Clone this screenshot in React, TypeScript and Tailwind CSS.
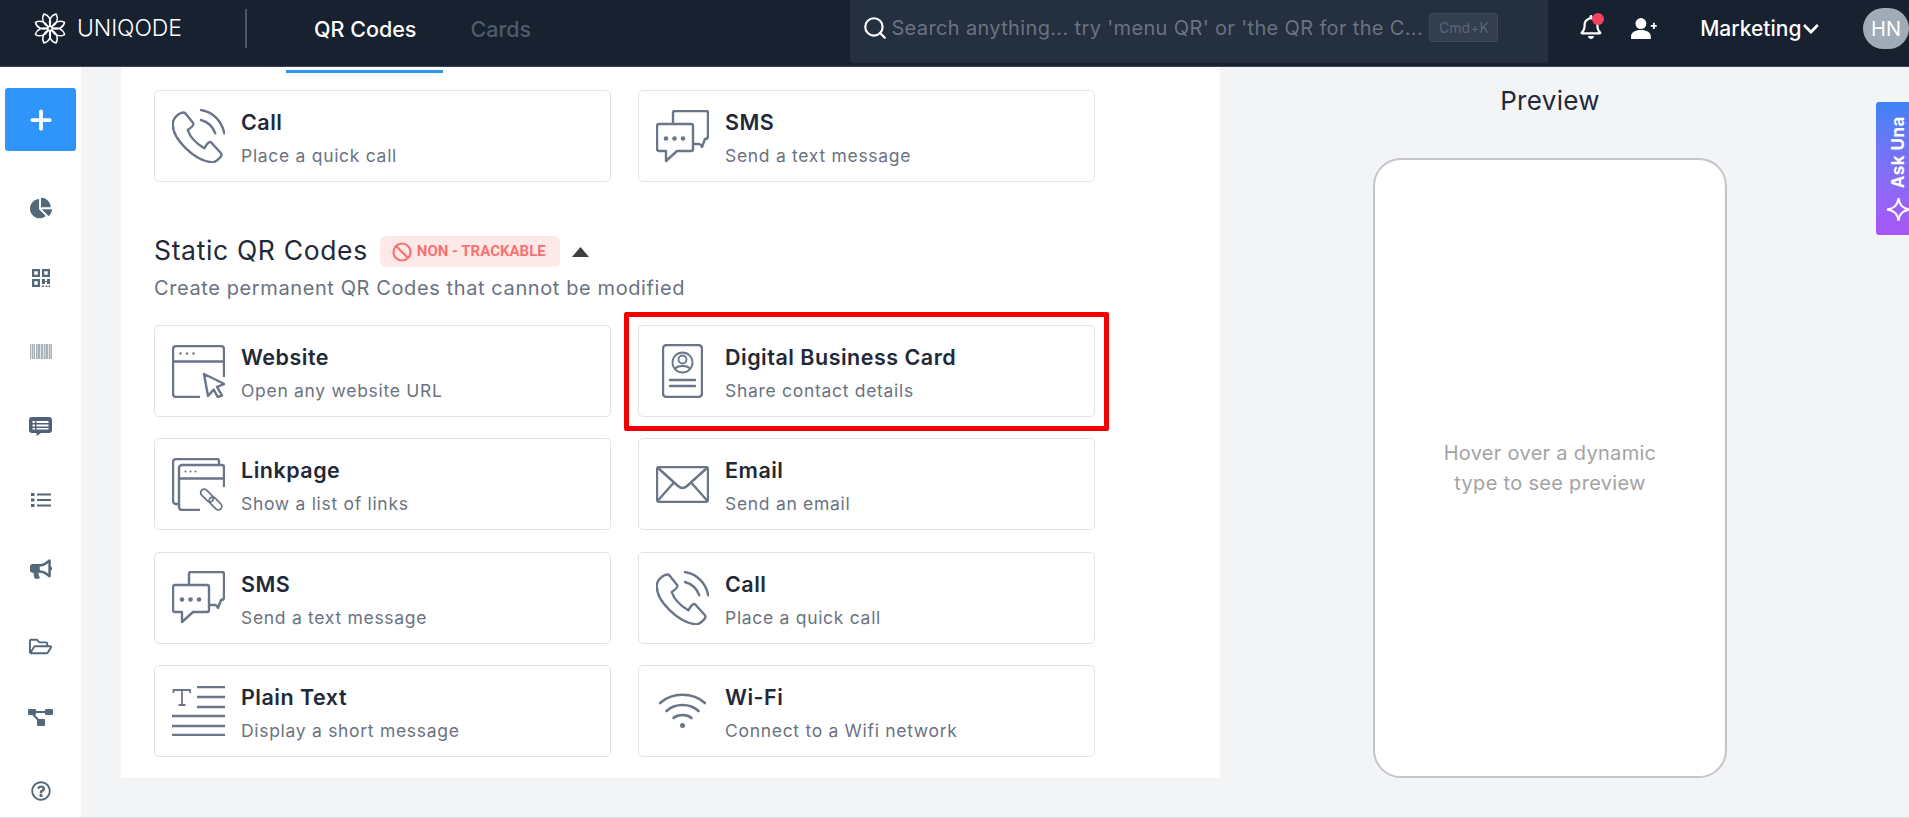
import { Search, Plus } from 'lucide-react';
import {
  FaChartPie,
  FaBullhorn,
  FaRegFolderOpen,
  FaRegQuestionCircle,
  FaRegBell,
  FaChevronDown,
} from 'react-icons/fa';

const font = 'font-["Inter","Liberation_Sans",sans-serif]';

function Logo() {
  const petals = [22.5, 67.5, 112.5, 157.5, 202.5, 247.5, 292.5, 337.5];
  return (
    <svg viewBox="0 0 34 34" className="h-[33px] w-[34px]" fill="none" stroke="#fff" strokeWidth="1.5">
      {petals.map((a) => (
        <g key={a} transform={`rotate(${a} 17 17)`}>
          <path d="M17 15C12 11 12.500 4 17 .8C21.500 4 22 11 17 15Z" />
        </g>
      ))}
    </svg>
  );
}

function PhoneIcon() {
  return (
    <svg viewBox="0 0 53 54" className="h-[54px] w-[53px]" fill="none" stroke="#6b7588" strokeWidth="2.4" strokeLinecap="round" strokeLinejoin="round">
      <path d="M5.700 6C7.500 4.500 11.500 2.500 13.300 4.300L21.300 14.300C22.300 16 20 18 15.700 21C18 28 25 35 32.300 39.300C35 35 37 32 39 33.300L49 44.300C50 46 49 48 47.300 49.300C45 51.500 42 54 39 53.200C22 51 1 30 .8 16C.5 12 3 8 5.700 6Z" />
      <path d="M29 1C41 3 50 12 52.300 24.300" />
      <path d="M29 11C36 13 41 18 43.300 24.300" />
    </svg>
  );
}

function SmsIcon() {
  return (
    <svg viewBox="0 0 53 53" className="h-[53px] w-[53px]" fill="none" stroke="#6b7588" strokeWidth="2.4" strokeLinecap="round" strokeLinejoin="round">
      <path d="M17 13V3a2 2 0 0 1 2-2h31a2 2 0 0 1 2 2v23c0 2-1 3-3 3l-3 8c-1-2-2-3-3-3h-6" />
      <path d="M3 14h32a2 2 0 0 1 2 2v23a2 2 0 0 1-2 2H21L10 51V41H3a2 2 0 0 1-2-2V16a2 2 0 0 1 2-2Z" />
      <circle cx="10" cy="28.500" r="2.300" fill="#6b7588" stroke="none" />
      <circle cx="18.500" cy="28.500" r="2.300" fill="#6b7588" stroke="none" />
      <circle cx="27" cy="28.500" r="2.300" fill="#6b7588" stroke="none" />
    </svg>
  );
}

function WebsiteIcon() {
  return (
    <svg viewBox="0 0 53 53" className="h-[53px] w-[53px]" fill="none" stroke="#6b7588" strokeWidth="2.4" strokeLinecap="round" strokeLinejoin="round">
      <path d="M27 52H4a3 3 0 0 1-3-3V4a3 3 0 0 1 3-3h45a3 3 0 0 1 3 3v27" />
      <path d="M2 16.500h50" />
      <circle cx="8.500" cy="8.500" r="1.200" fill="#6b7588" stroke="none" />
      <circle cx="15" cy="8.500" r="1.200" fill="#6b7588" stroke="none" />
      <circle cx="21.500" cy="8.500" r="1.200" fill="#6b7588" stroke="none" />
      <path d="M32 29L52.500 39L45 41.800L50 50.500L45.700 52L41.700 44.500L36 51Z" />
    </svg>
  );
}

function LinkpageIcon() {
  return (
    <svg viewBox="0 0 53 53" className="h-[53px] w-[53px]" fill="none" stroke="#6b7588" strokeWidth="2.4" strokeLinecap="round" strokeLinejoin="round">
      <path d="M47 5V3a2 2 0 0 0-2-2H4a3 3 0 0 0-3 3v39a3 3 0 0 0 3 3h3" />
      <path d="M27 52H10a3 3 0 0 1-3-3V10a3 3 0 0 1 3-3h40a2 2 0 0 1 2 2v19" />
      <path d="M7 20.500h45" />
      <circle cx="13.500" cy="13.500" r="1.100" fill="#6b7588" stroke="none" />
      <circle cx="18.500" cy="13.500" r="1.100" fill="#6b7588" stroke="none" />
      <circle cx="23.500" cy="13.500" r="1.100" fill="#6b7588" stroke="none" />
      <rect x="27.500" y="34" width="15" height="7" rx="3.500" transform="rotate(45 35 37.500)" strokeWidth="1.800" />
      <rect x="36" y="42" width="15" height="7" rx="3.500" transform="rotate(45 43.500 45.500)" strokeWidth="1.800" />
    </svg>
  );
}

function CardIcon() {
  return (
    <svg viewBox="0 0 41 54" className="h-[54px] w-[41px]" fill="none" stroke="#6b7588" strokeWidth="2.4" strokeLinecap="round" strokeLinejoin="round">
      <rect x="1" y="1" width="39" height="52" rx="3.500" />
      <circle cx="20.500" cy="18.500" r="10" strokeWidth="1.800" />
      <circle cx="20.500" cy="15.500" r="4" strokeWidth="1.800" />
      <path d="M13 25c2-4 13-4 15 0" strokeWidth="1.800" />
      <path d="M8 36h25M8 42h25" />
    </svg>
  );
}

function EmailIcon() {
  return (
    <svg viewBox="0 0 53 37" className="h-[37px] w-[53px]" fill="none" stroke="#6b7588" strokeWidth="2.4" strokeLinecap="round" strokeLinejoin="round">
      <rect x="1" y="1" width="51" height="35" rx="3" />
      <path d="M1.500 1.500L22 20Q26.500 24 31 20L51.500 1.500" />
      <path d="M1.500 35L17 17.500M51.500 35L36 17.500" />
    </svg>
  );
}

function TextIcon() {
  return (
    <svg viewBox="0 0 53 50" className="h-[50px] w-[53px]" fill="none" stroke="#6b7588" strokeWidth="2.4">
      <path d="M1.500 7V4H18V7M10 4V19M6.500 19H13.500" strokeWidth="1.800" />
      <path d="M25 1h28M25 11h28M25 21h28M0 30h53M0 40h53M0 49h53" />
    </svg>
  );
}

function WifiIcon() {
  return (
    <svg viewBox="0 0 47 35" className="h-[35px] w-[47px]" fill="none" stroke="#6b7588" strokeWidth="2.600" strokeLinecap="round">
      <path d="M1 10C13-1 34-1 46 10" />
      <path d="M7.500 18C16 10 31 10 39.500 18" />
      <path d="M14.500 25C19 21 28 21 32.500 25" />
      <circle cx="23.500" cy="32.500" r="2.500" fill="#6b7588" stroke="none" />
    </svg>
  );
}

function QrNavIcon() {
  return (
    <svg viewBox="0 0 18 18" className="h-[18px] w-[18px]" fill="#53697a">
      <path fillRule="evenodd" d="M0 0h8v8H0ZM2.300 2.300v3.400h3.400V2.300ZM10 0h8v8h-8ZM12.300 2.300v3.400h3.400V2.300ZM0 10h8v8H0ZM2.300 12.300v3.400h3.400v-3.400Z" />
      <path d="M10 10h3v2h2v-2h3v5h-3v-2h-2v2h-3ZM10 16.500h2V18h-2ZM13.500 16.500h2V18h-2ZM16.500 16.500H18V18h-1.500Z" />
    </svg>
  );
}

function BarcodeNavIcon() {
  const bars = [0, 2, 3.5, 6, 7.5, 8.500, 10.500, 12, 14, 15.500, 17, 19, 20.500];
  return (
    <svg viewBox="0 0 21.500 15" className="h-[15px] w-[22px]" fill="#8b99a5">
      {bars.map((x) => (
        <rect key={x} x={x} y="0" width="1" height="15" />
      ))}
    </svg>
  );
}

function ChatNavIcon() {
  return (
    <svg viewBox="0 0 23 19" className="h-[19px] w-[23px]">
      <path fill="#52607c" d="M3 0h17a3 3 0 0 1 3 3v10a3 3 0 0 1-3 3H12l-4.500 3v-3H3a3 3 0 0 1-3-3V3a3 3 0 0 1 3-3Z" />
      <path fill="#fff" d="M3.500 4h2.500v2H3.500ZM7.500 4h12v2h-12ZM3.500 7.500h2.500v2H3.500ZM7.500 7.500h12v2h-12ZM3.500 11h2.500v1.500H3.500ZM7.500 11h12v1.500h-12Z" />
    </svg>
  );
}

function ListNavIcon() {
  return (
    <svg viewBox="0 0 20 14" className="h-[14px] w-[20px]" fill="#53697a">
      <path d="M0 0h3.500v3H0ZM6 .5h14v2H6ZM0 5.500h3.500v3H0ZM6 6h14v2H6ZM0 11h3.500v3H0ZM6 11.500h14v2H6Z" />
    </svg>
  );
}

function TreeNavIcon() {
  return (
    <svg viewBox="0 0 25 17" className="h-[17px] w-[25px]" fill="#53697a">
      <rect x="0" y="0" width="8" height="6" rx="1" />
      <rect x="17" y="0" width="8" height="6" rx="1" />
      <rect x="9" y="10" width="8" height="7" rx="1" />
      <path d="M8 2h9v2H8ZM6 5l6 6-1.500 1.500-6-6Z" />
    </svg>
  );
}

function UserAddIcon() {
  return (
    <svg viewBox="0 0 26 21" className="ml-[28px] mt-[18px] h-[21px] w-[26px]" fill="#fff">
      <circle cx="10" cy="5.500" r="5.500" />
      <path d="M0 21v-2.500C0 14.500 4 12 10 12s10 2.500 10 6.500V21Z" />
      <path d="M20 7h2.200V4.800h1.800V7h2v1.800h-2V11h-1.800V8.800H20Z" />
    </svg>
  );
}

const navItems = [
  { node: <FaChartPie className="text-[22px] text-[#53697a]" />, mt: 'mt-[45px]' },
  { node: <QrNavIcon />, mt: 'mt-[46px]' },
  { node: <BarcodeNavIcon />, mt: 'mt-[49px]' },
  { node: <ChatNavIcon />, mt: 'mt-[51px]' },
  { node: <ListNavIcon />, mt: 'mt-[50px]' },
  { node: <FaBullhorn className="text-[22px] text-[#53697a]" />, mt: 'mt-[45px]' },
  { node: <FaRegFolderOpen className="text-[23px] text-[#53697a]" />, mt: 'mt-[53px]' },
  { node: <TreeNavIcon />, mt: 'mt-[47px]' },
  { node: <FaRegQuestionCircle className="text-[20px] text-[#53697a]" />, mt: 'mt-[50px]' },
];

function QrCard({ icon, title, text }: { icon: React.ReactNode; title: string; text: string }) {
  return (
    <div className="flex h-[92px] items-center rounded-[5px] border border-[#e2e3e6] bg-white pl-[17px]">
      <div className="flex w-[53px] shrink-0 justify-center">{icon}</div>
      <div className="ml-[16px] pt-[4px]">
        <div className="text-[21.500px] leading-[28px] font-semibold tracking-[0.5px] text-[#1f2937]">{title}</div>
        <div className="mt-[8px] text-[17.500px] leading-[24px] tracking-[0.7px] text-[#6b7280]">{text}</div>
      </div>
    </div>
  );
}

export default function App() {
  return (
    <div className={`flex h-[818px] w-[1909px] flex-col overflow-hidden bg-[#f3f4f6] ${font}`}>
      {/* Top bar */}
      <header className="flex h-[67px] shrink-0 items-start border-b border-[#3a4656] bg-[#17212f]">
        <div className="ml-[33px] mt-[12px] flex items-center">
          <Logo />
          <span className="ml-[10px] w-[105px] text-[23px] leading-[33px] font-light tracking-[-0.1px] text-white">UNIQODE</span>
        </div>
        <div className="ml-[63px] mt-[9px] h-[39px] w-[2px] bg-[#4a5568]" />
        <div className="ml-[67px] mt-[16px] w-[103px] text-[21.500px] leading-[26px] font-medium whitespace-nowrap text-white">QR Codes</div>
        <div className="ml-[54px] mt-[16px] w-[60px] text-[21.500px] leading-[26px] font-medium text-[#4f5b6b]">Cards</div>
        <div className="ml-[320px] flex h-[63px] w-[698px] shrink-0 items-start rounded-b-[3px] bg-[#242f40] pl-[12px]">
          <Search className="mt-[15px] h-[26px] w-[26px] text-white" strokeWidth={2} />
          <span className="ml-[3px] mt-[16px] w-[536px] text-[20px] leading-[24px] tracking-[0.35px] whitespace-nowrap text-[#6b7280]">Search anything... try 'menu QR' or 'the QR for the C...</span>
          <span className="ml-[2px] mt-[13px] flex h-[29px] w-[69px] items-center justify-center rounded-[3px] border border-[#3d4858] bg-[#333e4e] text-[14px] text-[#596575]">Cmd+K</span>
        </div>
        <div className="relative ml-[31px] mt-[15px] text-white">
          <FaRegBell className="text-[24px]" />
          <span className="absolute -top-[2px] left-[13px] h-[12px] w-[12px] rounded-full bg-[#f43f5e]" />
        </div>
        <UserAddIcon />
        <div className="ml-[43px] mt-[16px] w-[103px] text-[21px] leading-[26px] font-medium text-white">Marketing</div>
        <FaChevronDown className="mt-[20px] h-[18px] w-[18px] text-white" />
        <div className="ml-[43px] mt-[8px] flex h-[41px] w-[46px] shrink-0 items-center justify-center rounded-full bg-[#9fabb7] text-[20px] text-white">HN</div>
      </header>

      <div className="flex min-h-0 flex-1 border-b border-[#dcdde0]">
        {/* Left nav */}
        <aside className="flex w-[81px] shrink-0 flex-col items-center bg-white pt-[21px]">
          <div className="flex h-[63px] w-[71px] items-center justify-center rounded-[3px] bg-[#2f95fb] text-white">
            <Plus className="h-[30px] w-[30px]" strokeWidth={3} />
          </div>
          {navItems.map((item, i) => (
            <div key={i} className={`flex h-[24px] items-center justify-center ${item.mt}`}>
              {item.node}
            </div>
          ))}
        </aside>

        {/* Type picker */}
        <main className="ml-[40px] h-[711px] w-[1099px] shrink-0 bg-white">
          <div className="ml-[165px] mt-[3px] h-[3px] w-[157px] bg-[#2f95f0]" />
          <div className="ml-[33px] w-[940px]">
            <div className="mt-[17px] grid grid-cols-[457px_457px] gap-x-[27px]">
              <QrCard icon={<PhoneIcon />} title="Call" text="Place a quick call" />
              <QrCard icon={<SmsIcon />} title="SMS" text="Send a text message" />
            </div>

            <div className="mt-[51px] flex items-center">
              <h2 className="text-[26.500px] leading-[31px] font-normal tracking-[0.65px] whitespace-nowrap text-[#1f2937]">Static QR Codes</h2>
              <div className="ml-[12px] mt-[3px] flex h-[31px] w-[180px] items-center rounded-[6px] bg-[#fee9e9] pl-[12px]">
                <svg viewBox="0 0 20 20" className="h-[20px] w-[20px]" fill="none" stroke="#f87171" strokeWidth="2.200">
                  <circle cx="10" cy="10" r="8.500" />
                  <path d="M4 4L16 16" />
                </svg>
                <span className="ml-[5px] font-['Roboto',sans-serif] text-[15px] font-bold whitespace-nowrap text-[#f87171]">NON - TRACKABLE</span>
              </div>
              <svg viewBox="0 0 17 10" className="ml-[12px] mt-[3px] h-[10px] w-[17px]" fill="#3f3f3f">
                <path d="M8.500 0L17 10H0Z" />
              </svg>
            </div>
            <p className="mt-[8px] text-[20px] leading-[26px] tracking-[0.6px] whitespace-nowrap text-[#6b7280]">Create permanent QR Codes that cannot be modified</p>

            <div className="mt-[24px] grid grid-cols-[457px_457px] gap-x-[27px] gap-y-[21.300px]">
              <QrCard icon={<WebsiteIcon />} title="Website" text="Open any website URL" />
              <div className="relative">
                <QrCard icon={<CardIcon />} title="Digital Business Card" text="Share contact details" />
                <div className="absolute -top-[13px] -right-[14px] -bottom-[14px] -left-[14px] rounded-[2px] border-[5px] border-[#f40000]" />
              </div>
              <QrCard icon={<LinkpageIcon />} title="Linkpage" text="Show a list of links" />
              <QrCard icon={<EmailIcon />} title="Email" text="Send an email" />
              <QrCard icon={<SmsIcon />} title="SMS" text="Send a text message" />
              <QrCard icon={<PhoneIcon />} title="Call" text="Place a quick call" />
              <QrCard icon={<TextIcon />} title="Plain Text" text="Display a short message" />
              <QrCard icon={<WifiIcon />} title="Wi-Fi" text="Connect to a Wifi network" />
            </div>
          </div>
        </main>

        {/* Preview */}
        <section className="relative flex min-w-0 flex-1 flex-col items-center pr-[29px]">
          <h2 className="mt-[18px] text-[26px] leading-[32px] font-normal tracking-[0.3px] text-[#1f2937]">Preview</h2>
          <div className="mt-[41px] flex h-[620px] w-[354px] flex-col items-center rounded-[28px] border-2 border-[#c3c5cb] bg-white pt-[278px]">
            <p className="w-[250px] text-center text-[20px] leading-[30px] tracking-[0.3px] text-[#a3a3a3]">Hover over a dynamic type to see preview</p>
          </div>
          <div className="absolute right-0 top-[35px] flex h-[133px] w-[33px] flex-col items-center overflow-hidden rounded-l-[3px] bg-gradient-to-b from-[#3b82f6] to-[#a855f7] pl-[11px]">
            <span className="mt-[14px] rotate-180 text-[17px] leading-[24px] font-bold tracking-[0.5px] whitespace-nowrap text-white [writing-mode:vertical-rl]">Ask Una</span>
            <svg viewBox="0 0 24 24" className="mt-[9px] h-[25px] w-[25px] shrink-0" fill="none" stroke="#fff" strokeWidth="2">
              <path d="M12 1C13 8 16 11 23 12C16 13 13 16 12 23C11 16 8 13 1 12C8 11 11 8 12 1Z" />
            </svg>
          </div>
        </section>
      </div>
    </div>
  );
}
